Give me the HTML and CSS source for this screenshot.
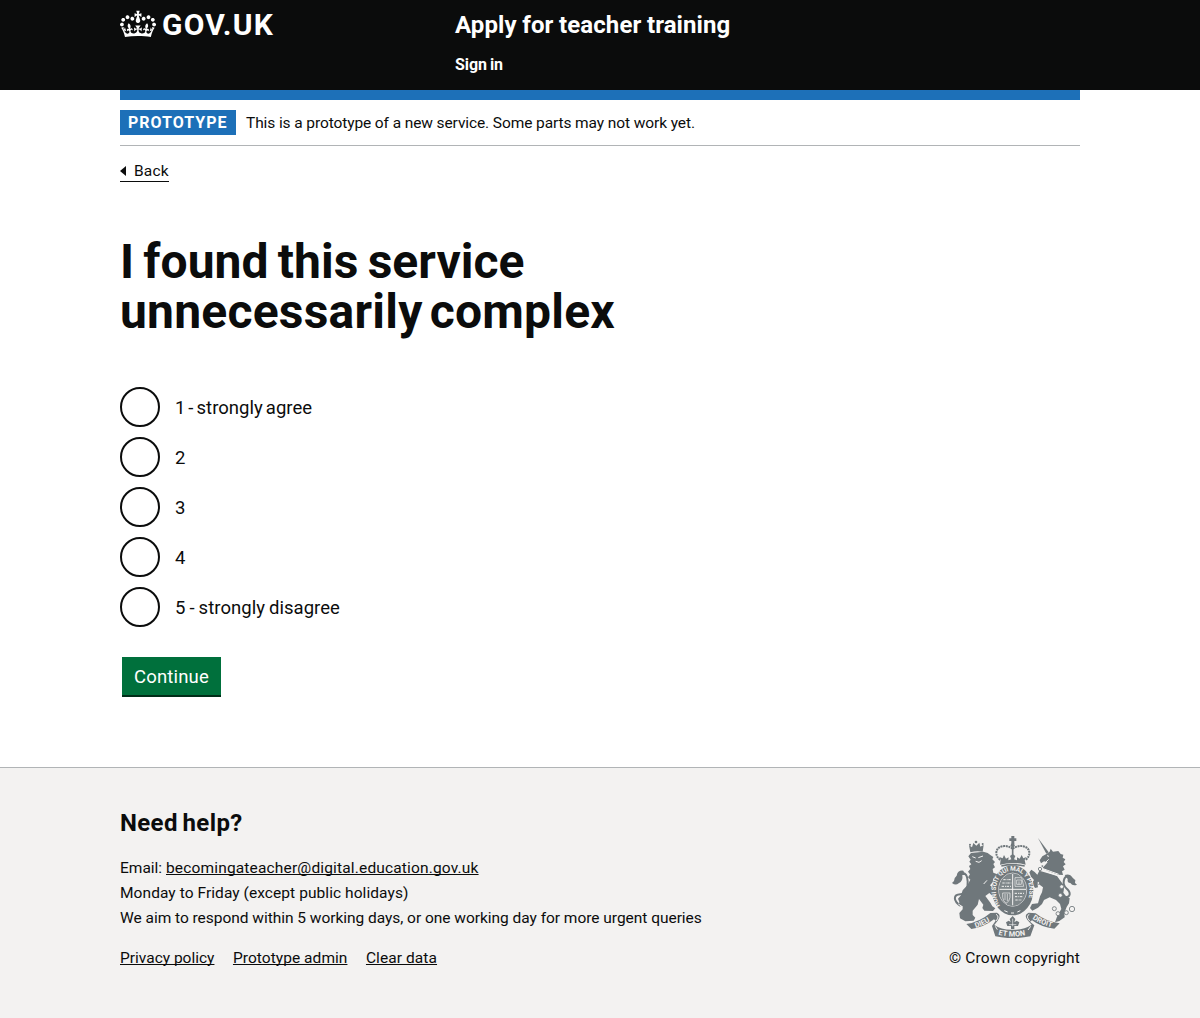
FILE: index.html
```
<!DOCTYPE html>
<html lang="en">
<head>
<meta charset="utf-8">
<title>I found this service unnecessarily complex - Apply for teacher training</title>
<link rel="stylesheet" href="styles.css">
</head>
<body>
<header class="header">
  <div class="container header-inner">
    <a class="logo" href="#">
      <svg class="logo-crown" viewBox="0 0 132 97" width="36" height="32" aria-hidden="true"><path fill="currentColor" fill-rule="evenodd" d="M25 30.2c3.5 1.5 7.7-.2 9.1-3.7 1.5-3.6-.2-7.8-3.9-9.2-3.6-1.4-7.6.3-9.1 3.9-1.4 3.5.3 7.5 3.9 9zM9 39.5c3.6 1.5 7.8-.2 9.2-3.7 1.5-3.6-.2-7.8-3.9-9.1-3.6-1.5-7.6.2-9.1 3.8-1.4 3.5.3 7.5 3.8 9zM4.4 57.2c3.5 1.5 7.7-.2 9.1-3.8 1.5-3.6-.2-7.7-3.9-9.1-3.5-1.5-7.6.3-9.1 3.8-1.4 3.5.3 7.6 3.9 9.1zm38.3-21.4c3.5 1.5 7.7-.2 9.1-3.8 1.5-3.6-.2-7.7-3.9-9.1-3.6-1.5-7.6.3-9.1 3.8-1.3 3.6.4 7.7 3.9 9.1zm64.4-5.6c-3.6 1.5-7.8-.2-9.1-3.7-1.5-3.6.2-7.8 3.8-9.2 3.6-1.4 7.7.3 9.2 3.9 1.3 3.5-.4 7.5-3.9 9zm15.9 9.3c-3.6 1.5-7.7-.2-9.1-3.7-1.5-3.6.2-7.8 3.7-9.1 3.6-1.5 7.7.2 9.2 3.8 1.5 3.5-.3 7.5-3.8 9zm4.7 17.7c-3.6 1.5-7.8-.2-9.2-3.8-1.5-3.6.2-7.7 3.9-9.1 3.6-1.5 7.7.3 9.2 3.8 1.3 3.5-.4 7.6-3.9 9.1zM89.3 35.8c-3.6 1.5-7.8-.2-9.2-3.8-1.4-3.6.2-7.7 3.9-9.1 3.6-1.5 7.7.3 9.2 3.8 1.4 3.6-.3 7.7-3.9 9.1zM69.7 17.7l8.9 4.7V9.3l-8.9 2.8c-.2-.3-.5-.6-.9-.9L72.4 0H59.6l3.5 11.2c-.3.3-.6.5-.9.9l-8.8-2.8v13.1l8.8-4.7c.3.3.6.7.9.9l-5 15.4v.1c-.2.8-.4 1.6-.4 2.4 0 4.1 3.1 7.5 7 8.1h.2c.3 0 .7.1 1 .1.4 0 .7 0 1-.1h.2c4-.6 7.1-4.1 7.1-8.1 0-.8-.1-1.7-.4-2.4V34l-5.1-15.4c.4-.2.7-.6 1-.9zM66 92.8c16.9 0 32.8 1.1 47.1 3.2 4-16.9 8.9-26.7 14-33.5l-9.6-3.4c1 4.9 1.1 7.2 0 10.2-1.5-1.4-3-4.3-4.2-8.7L108.6 76c2.8-2 5-3.2 7.5-3.3-4.4 9.4-10 11.9-13.6 11.2-4.3-.8-6.3-4.6-5.6-7.9 1-4.7 5.7-5.9 8-.5 4.3-8.7-3-11.4-7.6-8.8 7.1-7.2 7.9-13.5 2.1-21.1-8 6.1-8.1 12.3-4.5 20.8-4.7-5.4-12.1-2.5-9.5 6.2 3.4-5.2 7.9-2 7.2 3.1-.6 4.3-6.4 7.8-13.5 7.2-10.3-.9-10.9-8-11.2-13.8 2.5-.5 7.1 1.8 11 7.3L80.2 60c-4.1 4.4-8 5.3-12.3 5.4 1.4-4.4 8-11.6 8-11.6H55.5s6.4 7.2 7.9 11.6c-4.2-.1-8-1-12.3-5.4l1.4 16.4c3.9-5.5 8.5-7.7 10.9-7.3-.3 5.8-.9 12.8-11.1 13.8-7.2.6-12.9-2.9-13.5-7.2-.7-5 3.8-8.3 7.1-3.1 2.7-8.7-4.6-11.6-9.4-6.2 3.7-8.5 3.6-14.7-4.6-20.8-5.8 7.6-5 13.9 2.2 21.1-4.7-2.6-11.9.1-7.7 8.8 2.3-5.5 7.1-4.2 8.1.5.7 3.3-1.3 7.1-5.7 7.9-3.5.7-9-1.8-13.5-11.2 2.5.1 4.7 1.3 7.5 3.3l-4.7-15.4c-1.2 4.4-2.7 7.2-4.3 8.7-1.1-3-.9-5.3 0-10.2l-9.5 3.4c5 6.9 9.9 16.7 14 33.5 14.8-2.1 30.8-3.2 47.7-3.2z"/></svg>
      <span class="logo-text">GOV.UK</span>
    </a>
    <div class="header-content">
      <a class="service-name" href="#">Apply for teacher training</a>
      <a class="sign-in" href="#">Sign in</a>
    </div>
  </div>
</header>

<div class="container page">
  <div class="phase-banner">
    <strong class="tag">PROTOTYPE</strong>
    <span class="phase-text">This is a prototype of a new service. Some parts may not work yet.</span>
  </div>
  <a class="back-link" href="#"><span>Back</span></a>

  <main>
    <form>
      <h1 class="heading"><span class="heading-first">I found this service</span><br>unnecessarily complex</h1>
      <div class="radios">
        <label class="radio"><input type="radio" name="complex"><span class="label-agree">1 - strongly agree</span></label>
        <label class="radio"><input type="radio" name="complex"><span>2</span></label>
        <label class="radio"><input type="radio" name="complex"><span>3</span></label>
        <label class="radio"><input type="radio" name="complex"><span>4</span></label>
        <label class="radio"><input type="radio" name="complex"><span>5 - strongly disagree</span></label>
      </div>
      <button class="button" type="button">Continue</button>
    </form>
  </main>
</div>

<footer class="footer">
  <div class="container footer-inner">
    <div class="footer-main">
      <h2 class="footer-heading">Need help?</h2>
      <ul class="help-list">
        <li>Email: <a class="email" href="#">becomingateacher@digital.education.gov.uk</a></li>
        <li class="hours">Monday to Friday (except public holidays)</li>
        <li class="response">We aim to respond within 5 working days, or one working day for more urgent queries</li>
      </ul>
      <ul class="link-list">
        <li><a href="#">Privacy policy</a></li>
        <li><a class="admin" href="#">Prototype admin</a></li>
        <li><a class="clear" href="#">Clear data</a></li>
      </ul>
    </div>
    <a class="copyright" href="#">
      <svg class="crest" viewBox="36 33 375 306" width="125" height="102" aria-hidden="true">
        <defs>
          <path id="garter" d="M181 243C158 210 162 141 218 137C274 141 278 210 255 243"/>
          <path id="ribbon-left" d="M107 309Q136 300 163 280"/>
          <path id="ribbon-mid" d="M175 329Q218 340 264 329"/>
          <path id="ribbon-right" d="M277 281Q304 300 342 308"/>
        </defs>
        <!-- lion -->
        <g class="ink">
          <path d="M91 82L87 61L96 67L100 54L109 62L118 53L121 65L131 60L128 80Q110 76 91 82z"/>
          <circle cx="108" cy="51" r="4"/><circle cx="90" cy="59" r="3"/><circle cx="128" cy="57" r="3"/>
          <path d="M93 84L130 80L143 84L151 90L160 96L157 103L165 111L160 117L165 127L158 132L160 143L170 147L178 158L168 164L160 160L158 172L150 181L170 199L182 211L184 222L175 226L164 219L148 204L136 213L151 233L157 244L166 250L159 258L133 257L127 249L130 239L117 222L113 239L98 257L98 270L106 278L101 287L76 289L60 280L58 264L68 253L68 244L56 242L58 231L54 221L63 211L68 196L82 181L91 164L84 157L90 148L84 140L91 132L87 123L94 118L88 110L92 104L85 94z"/>
        </g>
        <path class="line" stroke-width="6" d="M62 243C38 226 40 209 61 208C80 207 84 186 83 169C82 152 75 145 69 145"/>
        <path class="ink" d="M70 137Q53 135 50 152Q43 157 42 168L36 174Q47 183 56 175Q70 169 67 150L76 150z"/>
        <path class="gap" stroke-width="3" d="M97 95l10 4M115 98l14-5M107 109l10 3 8-5M55 237l12 8M141 166l-10 11"/>
        <!-- unicorn -->
        <path class="ink" d="M294 39L326 82L319 86z"/>
        <g class="ink">
          <path d="M319 87L329 80L332 71L339 80L355 78L362 87L370 89L368 98L376 103L371 111L377 118L369 124L374 134L366 139L369 150L355 149L326 139L307 130L323 112L312 109L303 115L299 106L307 94z"/>
          <path d="M298 137L324 145L351 153L359 164L369 178L372 191L370 203L377 212L389 220L387 235L380 246L373 264L374 277L358 288L345 292L351 275L364 252L360 237L348 225L329 217L312 225L306 237L294 248L277 257L270 249L276 237L294 235L300 214L306 202L309 187L292 174L294 187L285 189L276 174L282 165L273 155L268 142L274 134L284 141L292 149z"/>
        </g>
        <path class="gap" stroke-width="3" d="M301 128L356 148M303 135L352 151M321 92l6 2M318 111l8-8"/>
        <path class="line" stroke-width="4" stroke-dasharray="5 3" d="M305 122Q328 135 358 142"/>
        <path class="line" stroke-width="6" d="M372 217C394 217 393 202 379 190C366 178 369 151 388 154Q400 158 403 179"/>
        <path class="ink" d="M374 150Q391 145 397 159L406 165L405 174L411 179Q398 184 391 174Q381 174 383 162z"/>
        <g class="chain">
          <circle cx="300" cy="132" r="5"/><circle cx="295" cy="174" r="4"/><circle cx="365" cy="185" r="6"/><circle cx="361" cy="211" r="6"/>
          <circle cx="343" cy="251" r="6"/><circle cx="354" cy="266" r="6"/><circle cx="379" cy="263" r="6"/><circle cx="396" cy="252" r="8"/>
        </g>
        <!-- royal crown -->
        <path class="ink" d="M214 33h9v7h6v8h-6v9h-9v-9h-6v-8h6z"/>
        <circle class="ink" cx="218" cy="61" r="6"/>
        <path class="line beads" d="M218 71C198 57 169 62 169 84Q169 96 181 105M218 71C238 57 268 62 268 84Q268 96 256 105"/>
        <path class="line" stroke-width="5" d="M218 67V98"/>
        <path class="ink" d="M180 119L182 104L178 96L188 100L192 90L198 101L206 97L205 106L214 103L210 93L218 87L226 93L222 103L231 106L231 97L239 101L245 90L250 100L259 96L254 105L257 119Q218 109 180 119z"/>
        <path class="line" stroke-width="5" d="M184 123Q218 115 254 123"/>
        <!-- garter and shield -->
        <ellipse class="ink" cx="218" cy="196" rx="62" ry="75"/>
        <ellipse class="gap" stroke-width="2" cx="218" cy="194" rx="42" ry="50"/>
        <ellipse class="shield" cx="218" cy="194" rx="40" ry="48"/>
        <path class="gap" stroke-width="3" d="M218 147V241M178 193H258"/>
        <path class="gap" stroke-width="3" stroke-dasharray="7 3 3 2" d="M190 164h24M187 174h27M185 184h28M224 205h29M225 215h25M226 225h18"/>
        <path class="gap" stroke-width="2" d="M225 158h20l6 26h-26zM230 165h14v13h-14zM237 169v9M188 204h22v13q-2 14-12 18q-9-7-10-18zM195 207v18M202 207v21"/>
        <text class="motto"><textPath href="#garter" startOffset="1">HONI SOIT QUI MAL Y PENSE</textPath></text>
        <path class="ink" d="M180 249Q218 281 257 249L250 242Q218 268 188 242z"/>
        <path class="gap" stroke-width="3" d="M193 257l10 4M213 264h9M232 261l9-4"/>
        <!-- ribbon -->
        <path class="ink" d="M79 297Q119 291 151 264L171 263Q186 270 173 287L163 300Q184 315 218 314Q251 315 275 299L263 286Q250 269 266 263L287 265Q316 289 359 295L343 311Q302 306 276 286L270 290L283 301L271 334Q218 345 166 334L156 303L167 287L162 283Q133 306 94 312z"/>
        <path class="gap" stroke-width="3" d="M168 268Q180 274 168 288M268 268Q256 273 269 288M166 304L172 314M272 304L264 315"/>
        <path class="ink" d="M218 273l8 9-3 10 7-5 8 5-4 11h-11v9h-10v-9h-11l-4-11 8-5 6 4-3-9z"/>
        <path class="gap" stroke-width="2" d="M218 281v23M207 299h22"/>
        <text class="scroll"><textPath href="#ribbon-left">DIEU</textPath></text>
        <text class="scroll"><textPath href="#ribbon-mid">ET MON</textPath></text>
        <text class="scroll"><textPath href="#ribbon-right">DROIT</textPath></text>
      </svg>
      <span>© Crown copyright</span>
    </a>
  </div>
</footer>
</body>
</html>
```
FILE: styles.css
```
* { box-sizing: border-box; }

body {
  margin: 0;
  background: #fff;
  color: #0b0c0c;
  font: 15.5px/25px Roboto, "Liberation Sans", sans-serif;
}

a { color: inherit; text-decoration: none; }
ul { list-style: none; margin: 0; padding: 0; }
.container { width: 960px; margin: 0 auto; }

.header { height: 90px; background: #0b0c0c; color: #fff; }
.header-inner { display: flex; padding-top: 10px; }
.logo { display: flex; width: 335px; }
.logo-crown { margin-top: -2px; }
.logo-text { margin-left: 6px; font-size: 30px; font-weight: 700; line-height: 30px; letter-spacing: 1.2px; }
.header-content { display: flex; flex-direction: column; align-items: flex-start; }
.service-name { font-size: 24px; font-weight: 700; line-height: 30px; letter-spacing: .1px; word-spacing: -.5px; }
.sign-in { margin-top: 15px; font-size: 16px; font-weight: 700; line-height: 20px; letter-spacing: -.05px; word-spacing: -1px; }

.page { border-top: 10px solid #1d70b8; }
.phase-banner { display: flex; height: 46px; padding: 10px 0; border-bottom: 1px solid #b1b4b6; }
.tag { width: 116px; padding-left: 8px; background: #1d70b8; color: #fff; font-size: 16px; font-weight: 700; letter-spacing: 1px; }
.phase-text { margin-left: 10px; padding-top: 1px; letter-spacing: -.1px; }
.back-link { display: flex; align-items: center; width: 49px; height: 21px; margin-top: 15px; border-bottom: 1px solid #0b0c0c; line-height: 20px; letter-spacing: .2px; }
.back-link::before { content: ""; margin-right: 8px; border: solid transparent; border-width: 5px 6px 5px 0; border-right-color: #0b0c0c; }

.heading { margin: 55px 0 50px; font-size: 48px; font-weight: 700; line-height: 50px; letter-spacing: .22px; word-spacing: -5px; }
.heading-first { letter-spacing: .05px; word-spacing: -2.8px; }
.radios { display: flex; flex-direction: column; gap: 10px; }
.radio { display: flex; align-items: center; gap: 15px; height: 40px; font-size: 18.5px; letter-spacing: .03px; word-spacing: -.6px; }
.radio input { appearance: none; width: 40px; height: 40px; margin: 0; border: 2px solid #0b0c0c; border-radius: 50%; background: #fff; }
.radio span { padding-top: 2px; }
.radio .label-agree { letter-spacing: .04px; word-spacing: -1.7px; }
.button { display: block; width: 99px; height: 38px; margin: 30px 0 72px 2px; padding: 2px 0 0; border: 0; background: #00703c; box-shadow: 0 2px 0 #002d18; color: #fff; font: 18.5px/36px Roboto, "Liberation Sans", sans-serif; letter-spacing: .17px; }

.footer { height: 251px; padding-top: 40px; border-top: 1px solid #b1b4b6; background: #f3f2f1; }
.footer-inner { display: flex; justify-content: space-between; align-items: flex-end; }
.footer-heading { margin: 0 0 18px; font-size: 24px; line-height: 30px; letter-spacing: .35px; word-spacing: -1.5px; }
.footer a { text-decoration: underline; text-decoration-thickness: 1px; text-underline-offset: 1px; text-decoration-skip-ink: none; }
.email { letter-spacing: .16px; }
.hours { letter-spacing: .07px; }
.response { letter-spacing: -.03px; }
.link-list { display: flex; gap: 18.5px; margin-top: 15px; }
.admin { letter-spacing: .05px; }
.clear { letter-spacing: .08px; }
.footer .copyright { display: flex; flex-direction: column; align-items: center; width: 131px; text-decoration: none; white-space: nowrap; letter-spacing: .16px; }

.crest { margin-bottom: 8px; }
.ink { fill: #6f777b; }
.line { fill: none; stroke: #6f777b; }
.beads { stroke-width: 6px; stroke-dasharray: 6 2; }
.gap { fill: none; stroke: #f3f2f1; }
.chain { fill: #f3f2f1; stroke: #6f777b; stroke-width: 2.5px; }
.shield { fill: #7f878a; }
.motto { fill: #f3f2f1; font-size: 19px; font-weight: 700; letter-spacing: -.4px; }
.scroll { fill: #f3f2f1; font-size: 22px; font-weight: 700; }
```
